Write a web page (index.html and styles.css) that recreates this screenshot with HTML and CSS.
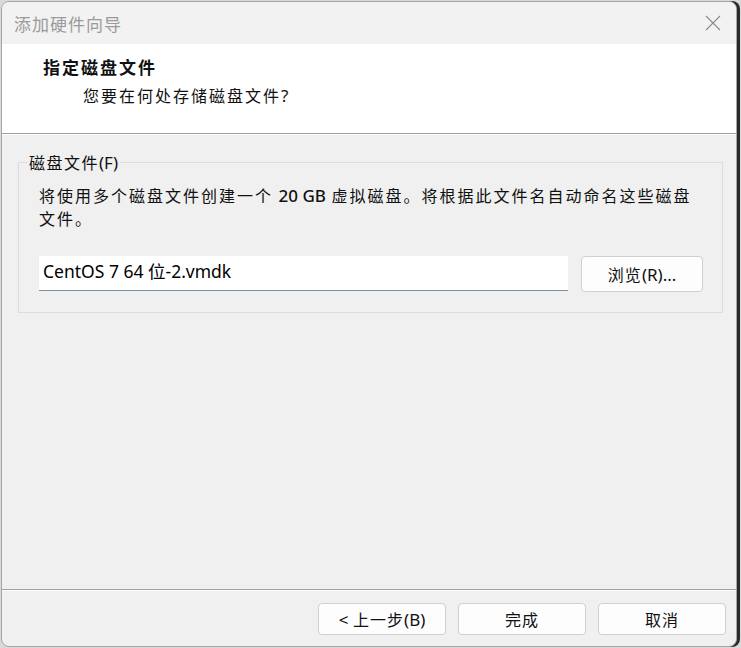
FILE: index.html
```html
<!DOCTYPE html>
<html lang="zh-CN">
<head>
<meta charset="utf-8">
<title>添加硬件向导</title>
<link rel="stylesheet" href="styles.css">
</head>
<body>
<div class="window">
  <div class="titlebar">
    <span class="title">添加硬件向导</span>
    <svg class="close" width="16" height="16" viewBox="0 0 16 16"><path d="M1 1 L15 15 M15 1 L1 15" stroke="#8a8a8a" stroke-width="1.1" fill="none"/></svg>
  </div>
  <div class="header">
    <div class="heading">指定磁盘文件</div>
    <div class="subtitle">您要在何处存储磁盘文件<span class="latin">?</span></div>
  </div>
  <div class="content">
    <div class="group">
      <span class="group-label">磁盘文件<span class="latin">(F)</span></span>
      <p class="desc">将使用多个磁盘文件创建一个 <span class="latin num">20 GB</span> 虚拟磁盘。将根据此文件名自动命名这些磁盘文件。</p>
      <div class="file-row">
        <div class="input">CentOS 7 64 位-2.vmdk</div>
        <button class="btn browse">浏览<span class="latin">(R)...</span></button>
      </div>
    </div>
  </div>
  <div class="footer">
    <button class="btn"><span class="latin">&lt;</span> 上一步<span class="latin">(B)</span></button>
    <button class="btn">完成</button>
    <button class="btn">取消</button>
  </div>
</div>
</body>
</html>
```

FILE: styles.css
```css
html, body {
  margin: 0;
  padding: 0;
}
body {
  width: 741px;
  height: 648px;
  background: #d9d9d9;
  overflow: hidden;
  font-family: "Noto Sans CJK SC", sans-serif;
}
.window {
  margin: 1px 0 0 1px;
  width: 736px;
  height: 646px;
  box-sizing: border-box;
  border: 1px solid #a6a6a6;
  border-radius: 8px;
  background: #f0f0f0;
  display: flex;
  flex-direction: column;
  overflow: hidden;
  box-shadow: 3px 0 0 #2a2a2a;
}
.titlebar {
  height: 42px;
  flex: none;
  background: #f2f2f2;
  display: flex;
  align-items: center;
  justify-content: space-between;
  padding: 0 15px 0 12px;
}
.title {
  font-size: 17px;
  letter-spacing: 1px;
  color: #9a9a9a;
}
.close {
  display: block;
}
.header {
  height: 90px;
  flex: none;
  box-sizing: border-box;
  background: #fff;
  border-bottom: 1px solid #a0a0a0;
  padding: 11px 0 0 41px;
  color: #111;
}
.heading {
  font-size: 17px;
  font-weight: bold;
  letter-spacing: 2px;
  line-height: 24px;
}
.subtitle {
  font-size: 16px;
  letter-spacing: 2px;
  line-height: 24px;
  margin: 4px 0 0 40px;
}
.latin {
  font-family: "Noto Sans", "Noto Sans CJK SC", sans-serif;
  font-size: 17px;
  letter-spacing: 0;
}
.content {
  flex: 1;
  border-top: 1px solid #fff;
  padding: 27px 13px 0 16px;
}
.group {
  position: relative;
  border: 1px solid #dcdcdc;
  padding: 21px 19px 20px 20px;
}
.group-label {
  position: absolute;
  left: 8px;
  top: -13px;
  padding: 0 2px;
  background: #f0f0f0;
  font-size: 16px;
  line-height: 24px;
  letter-spacing: 1.5px;
  color: #111;
}
.desc {
  margin: 0;
  font-size: 16px;
  line-height: 23px;
  letter-spacing: 2px;
  color: #111;
}
.desc .num {
  font-size: 17px;
  font-weight: 500;
}
.file-row {
  display: flex;
  gap: 13px;
  margin-top: 26px;
}
.input {
  width: 530px;
  height: 35px;
  box-sizing: border-box;
  background: #fff;
  border-bottom: 1px solid #7d8fa5;
  padding: 0 4px;
  font-family: "Noto Sans", "Noto Sans CJK SC", sans-serif;
  font-size: 17.5px;
  line-height: 30px;
  color: #000;
}
.btn {
  box-sizing: border-box;
  height: 32px;
  width: 128px;
  border: 1px solid #d0d0d0;
  border-radius: 4px;
  background: #fdfdfd;
  font-family: "Noto Sans CJK SC", sans-serif;
  font-size: 16px;
  line-height: 28px;
  color: #111;
  padding: 0;
  letter-spacing: 1px;
}
.browse {
  width: 122px;
  height: 36px;
}
.footer {
  height: 57px;
  flex: none;
  box-sizing: border-box;
  border-top: 1px solid #a0a0a0;
  box-shadow: inset 0 1px 0 #fff;
  display: flex;
  justify-content: flex-end;
  gap: 12px;
  padding: 13px 10px 0 0;
}
```
